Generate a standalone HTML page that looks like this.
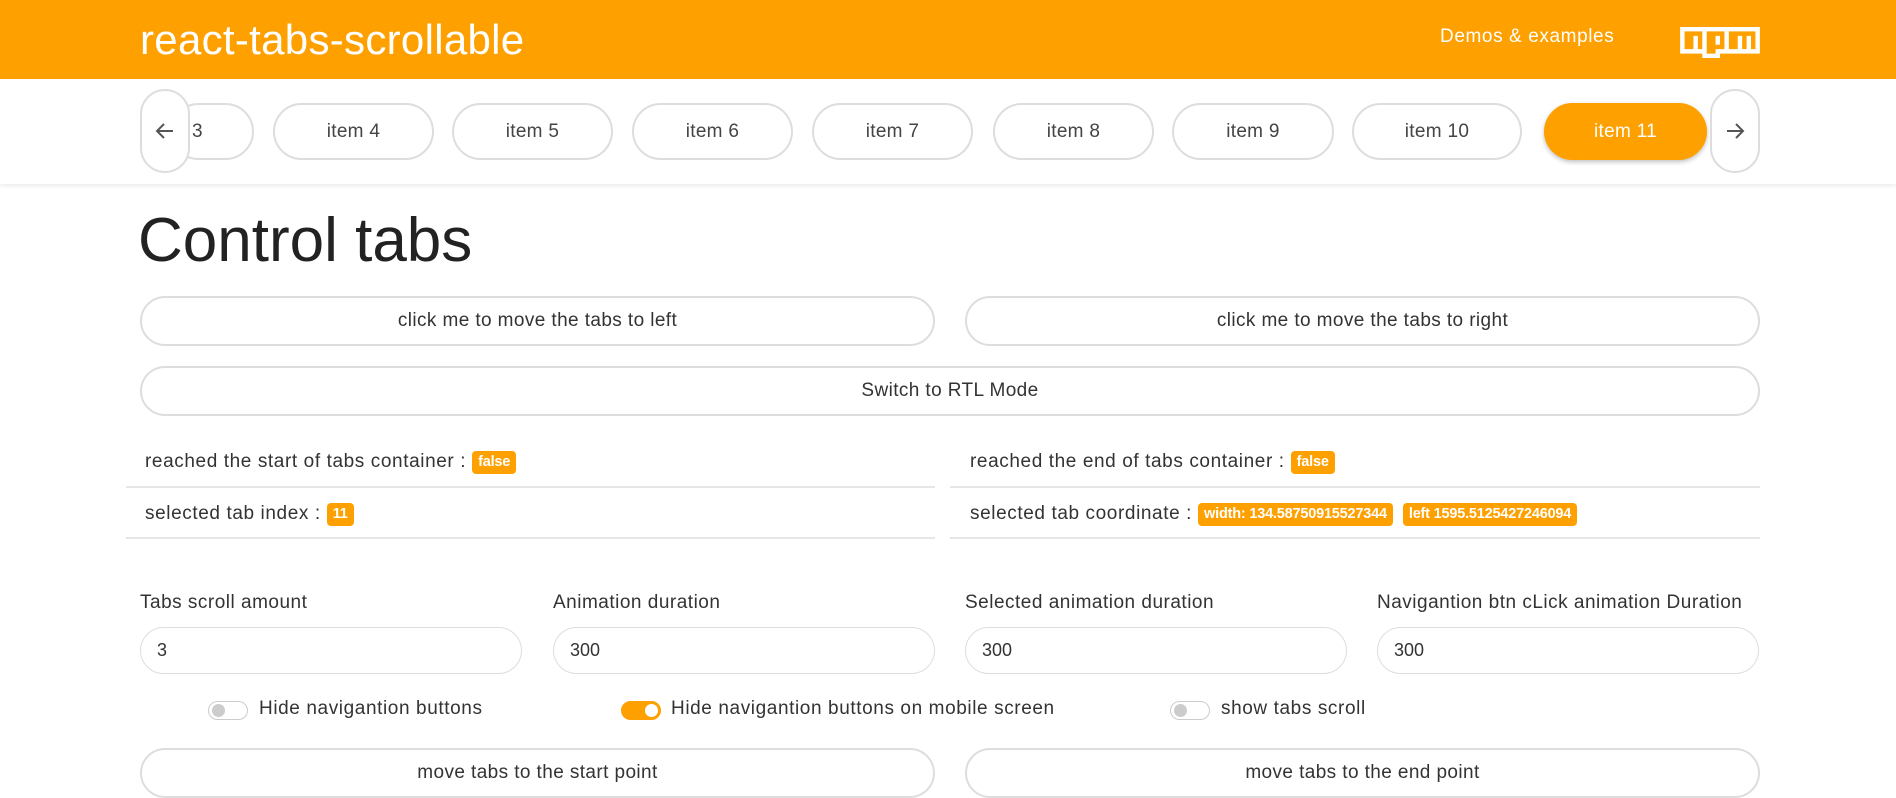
<!DOCTYPE html>
<html><head><meta charset="utf-8"><style>
*{box-sizing:border-box;margin:0;padding:0}
body{width:1896px;height:793px;overflow:hidden;background:#fff;font-family:"Liberation Sans",sans-serif;color:#333;position:relative}
.abs{position:absolute}
.hdr{left:0;top:0;width:1896px;height:79px;background:#fea000}
.title{left:140px;top:16px;font-size:42px;color:#fff;letter-spacing:0.3px}
.demos{left:1440px;top:26px;font-size:19px;color:#fff;letter-spacing:0.6px}
.bar{left:0;top:79px;width:1896px;height:105px;background:#fff;box-shadow:0 2px 4px rgba(0,0,0,0.08)}
.tab{position:absolute;top:103px;height:57px;border:2px solid #ddd;border-radius:29px;background:#fff;font-size:19px;color:#444;display:flex;align-items:center;justify-content:center;letter-spacing:0.3px}
.tab.sel{background:#fea000;border-color:#fea000;color:#fff;box-shadow:0 2px 5px rgba(0,0,0,0.25)}
.nav{position:absolute;top:89px;width:50px;height:84px;border:2px solid #ddd;border-radius:25px;background:#fff;display:flex;align-items:center;justify-content:center}
h1{position:absolute;left:138px;top:210px;font-size:62px;font-weight:300;color:#222;line-height:1}
.btn{position:absolute;height:50px;border:2px solid #ddd;border-radius:25px;background:#fff;font-size:19px;color:#333;display:flex;align-items:center;justify-content:center;letter-spacing:0.4px}
.info{position:absolute;font-size:19px;color:#333;display:flex;align-items:center;letter-spacing:0.6px}
.badge{display:inline-block;background:#fea000;color:#fff;font-weight:bold;font-size:14.5px;padding:4px 6px;border-radius:4px;margin-left:6px;letter-spacing:-0.2px;line-height:15px}
.hr{position:absolute;height:2px;background:#e6e6e6}
.lbl{position:absolute;top:592px;font-size:19px;color:#333;letter-spacing:0.5px}
.inp{position:absolute;top:627px;width:382px;height:47px;border:1.5px solid #ddd;border-radius:24px;font-size:18px;padding-left:16px;display:flex;align-items:center}
.tg{position:absolute;top:701px;width:40px;height:19px;border-radius:10px;border:1.5px solid #ccc;background:#fff}
.tg::after{content:"";position:absolute;left:3px;top:2px;width:13px;height:13px;border-radius:50%;background:#ccc}
.tg.on{background:#fea000;border-color:#fea000}
.tg.on::after{left:23px;background:#fff}
.tl{position:absolute;top:698px;font-size:19px;color:#333;letter-spacing:0.6px}
</style></head><body>
<div class="abs hdr"></div>
<div class="abs title">react-tabs-scrollable</div>
<div class="abs demos">Demos &amp; examples</div>
<svg class="abs" style="left:1680px;top:27px" width="80" height="31" viewBox="0 0 18 7"><path fill="#fff" d="M0,0h18v6H9v1H5V6H0V0z"/><path fill="#fea000" d="M1,1v4h2V2h1v3h1V1H1z M6,1v5h2V5h2V1H6z M8,2h1v2H8V2z M11,1v4h2V2h1v3h1V2h1v3h1V1H11z"/></svg>
<div class="abs bar"></div>
<div class="tab" style="left:170px;width:84px;justify-content:flex-start;padding-left:20px">3</div>
<div class="tab" style="left:273px;width:161px">item 4</div>
<div class="tab" style="left:452px;width:161px">item 5</div>
<div class="tab" style="left:632px;width:161px">item 6</div>
<div class="tab" style="left:812px;width:161px">item 7</div>
<div class="tab" style="left:993px;width:161px">item 8</div>
<div class="tab" style="left:1172px;width:162px">item 9</div>
<div class="tab" style="left:1352px;width:170px">item 10</div>
<div class="tab sel" style="left:1544px;width:163px">item 11</div>
<div class="nav" style="left:140px"><svg width="24" height="24" viewBox="0 0 24 24"><path d="M20 12H5M11 5l-7 7 7 7" fill="none" stroke="#555" stroke-width="2"/></svg></div>
<div class="nav" style="left:1710px"><svg width="24" height="24" viewBox="0 0 24 24"><path d="M4 12h15M13 5l7 7-7 7" fill="none" stroke="#555" stroke-width="2"/></svg></div>
<h1>Control tabs</h1>
<div class="btn" style="left:140px;top:296px;width:795px">click me to move the tabs to left</div>
<div class="btn" style="left:965px;top:296px;width:795px">click me to move the tabs to right</div>
<div class="btn" style="left:140px;top:366px;width:1620px">Switch to RTL Mode</div>
<div class="info" style="left:145px;top:450px;height:24px">reached the start of tabs container : <span class="badge">false</span></div>
<div class="info" style="left:970px;top:450px;height:24px">reached the end of tabs container : <span class="badge">false</span></div>
<div class="hr" style="left:126px;top:486px;width:809px"></div>
<div class="hr" style="left:950px;top:486px;width:810px"></div>
<div class="info" style="left:145px;top:502px;height:24px">selected tab index : <span class="badge">11</span></div>
<div class="info" style="left:970px;top:502px;height:24px">selected tab coordinate : <span class="badge">width: 134.58750915527344</span><span class="badge" style="margin-left:10px">left 1595.5125427246094</span></div>
<div class="hr" style="left:126px;top:537px;width:809px"></div>
<div class="hr" style="left:950px;top:537px;width:810px"></div>
<div class="lbl" style="left:140px">Tabs scroll amount</div>
<div class="lbl" style="left:553px">Animation duration</div>
<div class="lbl" style="left:965px">Selected animation duration</div>
<div class="lbl" style="left:1377px">Navigantion btn cLick animation Duration</div>
<div class="inp" style="left:140px">3</div>
<div class="inp" style="left:553px">300</div>
<div class="inp" style="left:965px">300</div>
<div class="inp" style="left:1377px">300</div>
<div class="tg" style="left:208px"></div><div class="tl" style="left:259px">Hide navigantion buttons</div>
<div class="tg on" style="left:621px"></div><div class="tl" style="left:671px">Hide navigantion buttons on mobile screen</div>
<div class="tg" style="left:1170px"></div><div class="tl" style="left:1221px">show tabs scroll</div>
<div class="btn" style="left:140px;top:748px;width:795px">move tabs to the start point</div>
<div class="btn" style="left:965px;top:748px;width:795px">move tabs to the end point</div>
</body></html>
